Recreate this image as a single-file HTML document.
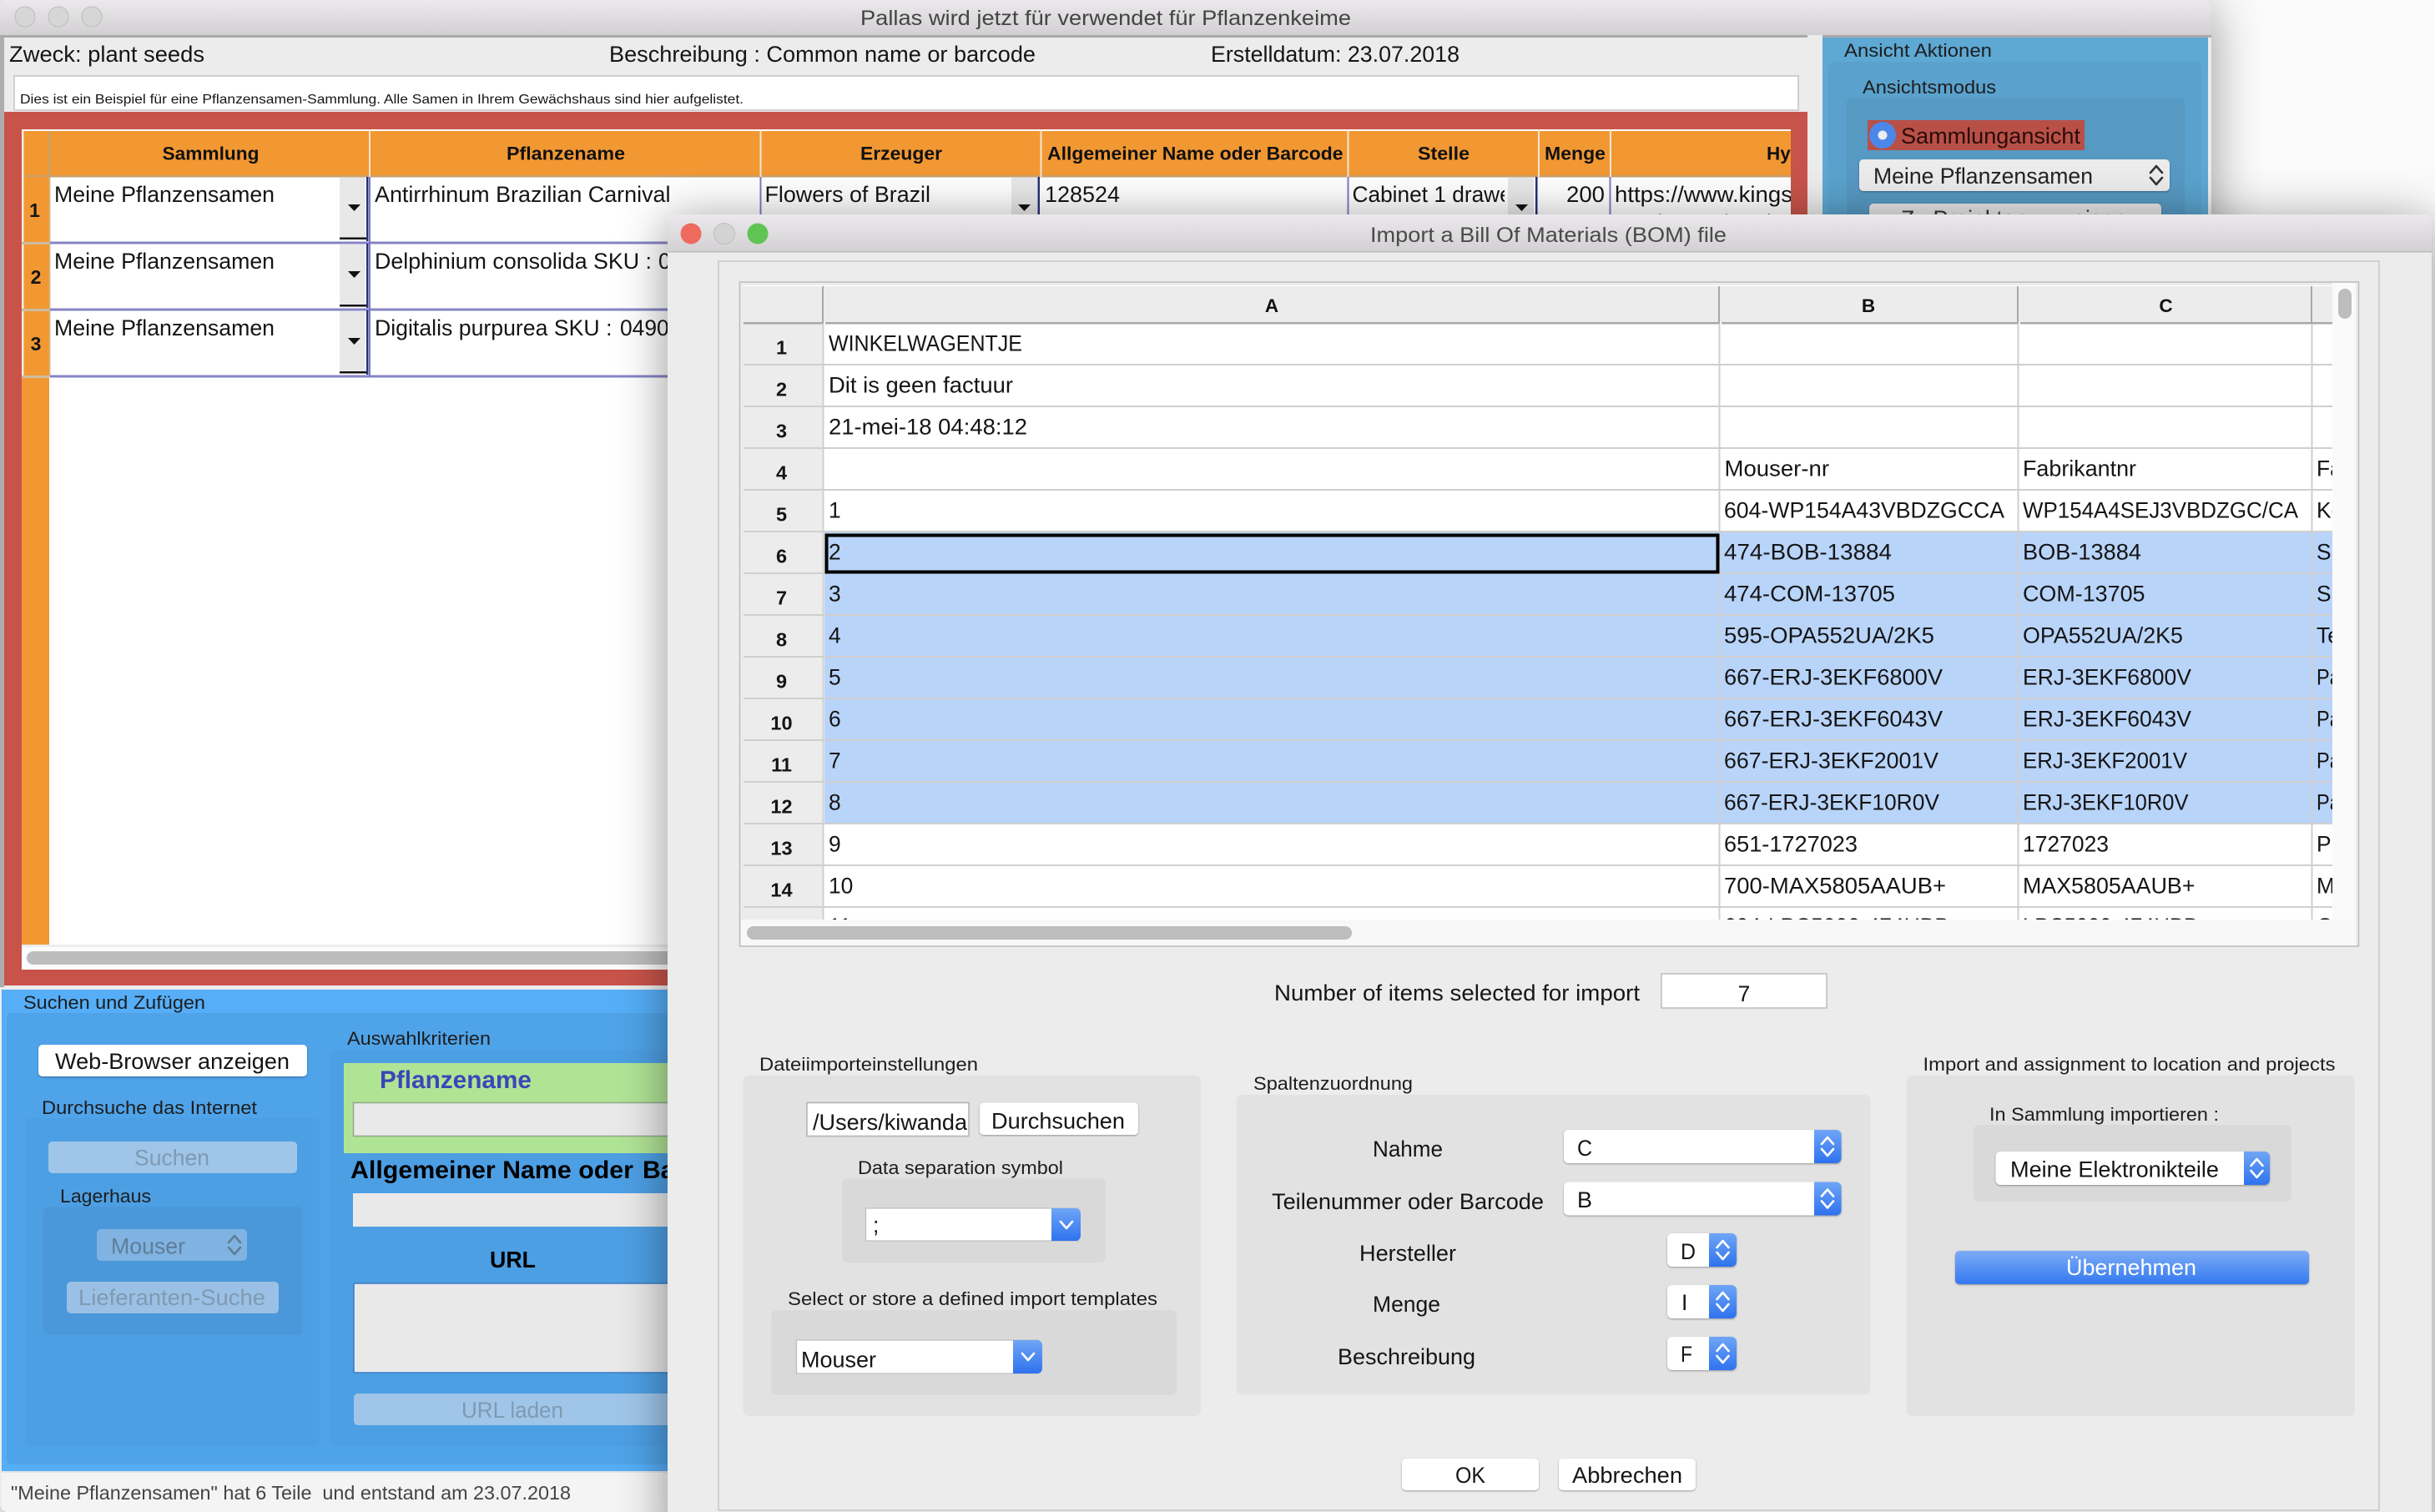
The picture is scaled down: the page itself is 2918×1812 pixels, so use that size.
<!DOCTYPE html>
<html lang="de"><head><meta charset="utf-8"><title>Pallas</title>
<style>
html,body{margin:0;padding:0;background:#fbfbfc;width:2918px;height:1812px;overflow:hidden}
svg{display:block}
text{font-family:"Liberation Sans",Arial,sans-serif;fill:#151515;font-size:26.4px}
.b{font-weight:bold}
.s{font-size:22px;fill:#1d1d1d}
.d{fill:#7f9ab2}
.t{font-size:25px;fill:#444}
.h{font-size:22.5px;font-weight:bold;fill:#111}
</style></head><body>
<svg xmlns="http://www.w3.org/2000/svg" width="2918" height="1812" viewBox="0 0 2918 1812">
<defs>
<filter id="ws" filterUnits="userSpaceOnUse" x="-200" y="-200" width="3400" height="2300"><feDropShadow dx="0" dy="8" stdDeviation="30" flood-color="#000" flood-opacity=".42"/></filter>
<filter id="bs" x="-10%" y="-20%" width="120%" height="150%"><feDropShadow dx="0" dy="1" stdDeviation="1" flood-color="#000" flood-opacity=".35"/></filter>
<linearGradient id="tb" x1="0" y1="0" x2="0" y2="1"><stop offset="0" stop-color="#ebe9eb"/><stop offset="1" stop-color="#d2d0d2"/></linearGradient>
<linearGradient id="bl" x1="0" y1="0" x2="0" y2="1"><stop offset="0" stop-color="#6fa6f7"/><stop offset="1" stop-color="#2f72ee"/></linearGradient>
<linearGradient id="ub" x1="0" y1="0" x2="0" y2="1"><stop offset="0" stop-color="#7cacf6"/><stop offset="1" stop-color="#3478f0"/></linearGradient>
<clipPath id="c-back"><rect x="0" y="0" width="2650" height="1812" rx="10"/></clipPath>
<clipPath id="c-tbl"><rect x="26" y="155" width="2120" height="1007"/></clipPath>
<clipPath id="c-stelle"><rect x="1616" y="212" width="187" height="80"/></clipPath>
<clipPath id="c-grid"><rect x="891" y="343" width="1904" height="759"/></clipPath>
<clipPath id="c-path"><rect x="967" y="1321" width="192" height="41"/></clipPath>
<g id="ud" fill="none" stroke-width="2.6" stroke-linecap="round" stroke-linejoin="round"><path d="M-7 -3 L0 -11 L7 -3"/><path d="M-7 3 L0 11 L7 3"/></g>
</defs>

<rect width="2918" height="1812" fill="#fbfbfc"/>

<!-- BACK WINDOW -->
<rect x="0" y="0" width="2650" height="1812" rx="10" fill="#ececec" filter="url(#ws)"/>
<g clip-path="url(#c-back)">
<rect x="0" y="0" width="2650" height="42" fill="url(#tb)"/>
<rect x="0" y="42" width="2166" height="3" fill="#a9a9a9"/>
<rect x="2184" y="42" width="466" height="3" fill="#a9a9a9"/>
<rect x="0" y="45" width="5" height="1138" fill="#adadad"/>
<circle cx="30" cy="20" r="12" fill="#d6d6d6" stroke="#bdbdbd"/>
<circle cx="70" cy="20" r="12" fill="#d6d6d6" stroke="#bdbdbd"/>
<circle cx="110" cy="20" r="12" fill="#d6d6d6" stroke="#bdbdbd"/>
<text class="t" x="1031" y="30" textLength="588" lengthAdjust="spacingAndGlyphs">Pallas wird jetzt für verwendet für Pflanzenkeime</text>

<text x="11" y="74" textLength="234" lengthAdjust="spacingAndGlyphs">Zweck: plant seeds</text>
<text x="730" y="74" textLength="511" lengthAdjust="spacingAndGlyphs">Beschreibung : Common name or barcode</text>
<text x="1451" y="74" textLength="298" lengthAdjust="spacingAndGlyphs">Erstelldatum: 23.07.2018</text>

<rect x="17" y="91" width="2138" height="41" fill="#fff" stroke="#c4c4c4" stroke-width="1.5"/>
<text x="24" y="124" style="font-size:16px" textLength="867" lengthAdjust="spacingAndGlyphs">Dies ist ein Beispiel für eine Pflanzensamen-Sammlung. Alle Samen in Ihrem Gewächshaus sind hier aufgelistet.</text>

<!-- red frame and table -->
<rect x="5" y="134" width="2161" height="1047" fill="#c8534a"/>
<rect x="26" y="155" width="2120" height="1007" fill="#fff"/>
<g clip-path="url(#c-tbl)">
<rect x="26" y="157" width="2120" height="53" fill="#f29833"/>
<rect x="26" y="210" width="2120" height="2.5" fill="#c9a06c"/>
<rect x="58" y="157" width="2.5" height="55" fill="#c9a06c"/>
<rect x="442" y="155" width="2" height="57" fill="#f5e7d2"/><rect x="910.5" y="155" width="2" height="57" fill="#f5e7d2"/><rect x="1246.5" y="155" width="2" height="57" fill="#f5e7d2"/><rect x="1614.5" y="155" width="2" height="57" fill="#f5e7d2"/><rect x="1843" y="155" width="2" height="57" fill="#f5e7d2"/><rect x="1929" y="155" width="2" height="57" fill="#f5e7d2"/>
<text class="h" x="194.5" y="191.5" textLength="116" lengthAdjust="spacingAndGlyphs">Sammlung</text>
<text class="h" x="607" y="191.5" textLength="142" lengthAdjust="spacingAndGlyphs">Pflanzename</text>
<text class="h" x="1031" y="191.5" textLength="98" lengthAdjust="spacingAndGlyphs">Erzeuger</text>
<text class="h" x="1255" y="191.5" textLength="354.5" lengthAdjust="spacingAndGlyphs">Allgemeiner Name oder Barcode</text>
<text class="h" x="1699" y="191.5" textLength="62" lengthAdjust="spacingAndGlyphs">Stelle</text>
<text class="h" x="1851" y="191.5" textLength="73" lengthAdjust="spacingAndGlyphs">Menge</text>
<text class="h" x="2117" y="191.5">Hyperlink</text>

<!-- row header column -->
<rect x="26" y="212" width="33" height="920" fill="#f29833"/>
<rect x="26" y="155" width="2.500" height="297" fill="#f7ecdc"/>
<rect x="26" y="290" width="33" height="3" fill="#cdbb9f"/><rect x="26" y="370" width="33" height="3" fill="#cdbb9f"/><rect x="26" y="450" width="33" height="3" fill="#cdbb9f"/>
<rect x="59" y="212" width="1.5" height="240" fill="#cdbb9f"/>
<text class="b" x="41.5" y="260" text-anchor="middle" style="font-size:23px">1</text>
<text class="b" x="43" y="340" text-anchor="middle" style="font-size:23px">2</text>
<text class="b" x="43" y="420" text-anchor="middle" style="font-size:23px">3</text>

<!-- grid lines -->
<rect x="60" y="289.5" width="1900" height="3" fill="#8585c4"/><rect x="60" y="369.5" width="1900" height="3" fill="#8585c4"/><rect x="60" y="449.5" width="1900" height="3" fill="#8585c4"/>
<rect x="442" y="212" width="2" height="240" fill="#7a7ac2"/><rect x="910.5" y="212" width="2" height="240" fill="#7a7ac2"/><rect x="1614.5" y="212" width="2" height="240" fill="#7a7ac2"/><rect x="1928.5" y="212" width="2" height="240" fill="#7a7ac2"/>

<!-- combo buttons -->
<rect x="407" y="213" width="31" height="72" fill="#e8e8e8"/><rect x="407" y="284.5" width="33" height="2.5" fill="#111"/><rect x="439" y="212" width="2.5" height="77" fill="#262f74"/><path d="M417 245H432L424.500 253Z" fill="#111"/>
<rect x="407" y="293" width="31" height="72" fill="#e8e8e8"/><rect x="407" y="365" width="33" height="2.5" fill="#111"/><rect x="439" y="292" width="2.5" height="77" fill="#262f74"/><path d="M417 325H432L424.500 333Z" fill="#111"/>
<rect x="407" y="373" width="31" height="72" fill="#e8e8e8"/><rect x="407" y="445" width="33" height="2.500" fill="#111"/><rect x="439" y="372" width="2.5" height="77" fill="#262f74"/><path d="M417 405H432L424.500 413Z" fill="#111"/>
<rect x="1212" y="213" width="31" height="72" fill="#e8e8e8"/><rect x="1243.500" y="212" width="2.5" height="77" fill="#262f74"/><path d="M1220 245H1235L1227.500 253Z" fill="#111"/>
<rect x="1807" y="213" width="31" height="72" fill="#e8e8e8"/><rect x="1840" y="212" width="2.500" height="77" fill="#262f74"/><path d="M1816 245H1831L1823.500 253Z" fill="#111"/>

<!-- cells -->
<text x="65" y="242" textLength="264" lengthAdjust="spacingAndGlyphs">Meine Pflanzensamen</text>
<text x="65" y="322" textLength="264" lengthAdjust="spacingAndGlyphs">Meine Pflanzensamen</text>
<text x="65" y="402" textLength="264" lengthAdjust="spacingAndGlyphs">Meine Pflanzensamen</text>
<text x="449" y="242" textLength="354.5" lengthAdjust="spacingAndGlyphs">Antirrhinum Brazilian Carnival</text>
<text x="449" y="322" textLength="332" lengthAdjust="spacingAndGlyphs">Delphinium consolida SKU :</text><text x="789" y="322">0490</text>
<text x="449" y="402" textLength="284.5" lengthAdjust="spacingAndGlyphs">Digitalis purpurea SKU :</text><text x="743" y="402">0490</text>
<text x="916.5" y="242" textLength="198.5" lengthAdjust="spacingAndGlyphs">Flowers of Brazil</text>
<text x="1252" y="242" textLength="90" lengthAdjust="spacingAndGlyphs">128524</text>
<g clip-path="url(#c-stelle)"><text x="1620.5" y="242" style="font-size:27px" textLength="200" lengthAdjust="spacingAndGlyphs">Cabinet 1 drawer</text></g>
<text x="1877" y="242" textLength="46" lengthAdjust="spacingAndGlyphs">200</text>
<text x="1935" y="242" textLength="213" lengthAdjust="spacingAndGlyphs">https://www.kings</text>
<text x="1935" y="276">seeds.com/product.html?search</text>

<!-- h scrollbar -->
<rect x="26" y="1132" width="2120" height="3" fill="#ededed"/>
<rect x="26" y="1135" width="2120" height="27" fill="#fbfbfb"/>
<rect x="32" y="1140" width="2100" height="16" rx="8" fill="#bdbdbd"/>
</g>

<!-- search panel -->
<rect x="2" y="1186" width="900" height="577" fill="#55aef7"/>
<text class="s" x="28" y="1209" textLength="218" lengthAdjust="spacingAndGlyphs">Suchen und Zufügen</text>
<rect x="8" y="1214" width="900" height="541" rx="6" fill="#4fa3e9"/>
<rect x="46" y="1252" width="322" height="38" rx="5" fill="#fff" filter="url(#bs)"/>
<text x="66" y="1281" textLength="281" lengthAdjust="spacingAndGlyphs">Web-Browser anzeigen</text>
<text class="s" x="50" y="1335" textLength="258" lengthAdjust="spacingAndGlyphs">Durchsuche das Internet</text>
<rect x="30" y="1340" width="353" height="393" rx="6" fill="#4d9fe4"/>
<rect x="58" y="1368" width="298" height="38" rx="5" fill="#9fc6e9"/>
<text class="d" x="161" y="1396.5" textLength="90" lengthAdjust="spacingAndGlyphs">Suchen</text>
<text class="s" x="72" y="1441" textLength="109" lengthAdjust="spacingAndGlyphs">Lagerhaus</text>
<rect x="52" y="1446" width="310" height="154" rx="6" fill="#4a97da"/>
<rect x="116" y="1473" width="180" height="38" rx="5" fill="#80b3e1"/>
<text x="133" y="1502.5" textLength="89" lengthAdjust="spacingAndGlyphs" style="fill:#5f7d98">Mouser</text>
<use href="#ud" x="281" y="1492" stroke="#5f7d98"/>
<rect x="80" y="1536" width="254" height="38" rx="5" fill="#9ac1e5"/>
<text class="d" x="94" y="1564" textLength="224" lengthAdjust="spacingAndGlyphs">Lieferanten-Suche</text>

<rect x="396" y="1258" width="500" height="475" rx="6" fill="#4d9fe4"/>
<text class="s" x="416" y="1252" textLength="172" lengthAdjust="spacingAndGlyphs">Auswahlkriterien</text>
<rect x="412" y="1274" width="500" height="108" fill="#b0e495"/>
<text class="b" x="455" y="1304" textLength="182" lengthAdjust="spacingAndGlyphs" style="font-size:30px;fill:#3b46b8">Pflanzename</text>
<rect x="423.500" y="1321.500" width="500" height="40" fill="#e9e9e9" stroke="#8ea888" stroke-width="1.500"/>
<text class="b" x="420" y="1412" textLength="339" lengthAdjust="spacingAndGlyphs" style="font-size:30px;fill:#000">Allgemeiner Name oder</text>
<text class="b" x="770" y="1412" style="font-size:30px;fill:#000">Barcode</text>
<rect x="423" y="1430" width="500" height="40" fill="#e9e9e9"/>
<text class="b" x="587" y="1519" textLength="55" lengthAdjust="spacingAndGlyphs" style="font-size:28px;fill:#000">URL</text>
<rect x="424" y="1538" width="500" height="107" fill="#e9e9e9" stroke="#3a7cc4" stroke-width="1.500"/>
<rect x="424" y="1670" width="500" height="38" rx="5" fill="#9fc6e9"/>
<text class="d" x="553" y="1699" textLength="122" lengthAdjust="spacingAndGlyphs">URL laden</text>

<rect x="2" y="1763" width="900" height="2.500" fill="#e4e4e4"/>
<rect x="2" y="1765" width="900" height="47" fill="#f4f4f4"/>
<text x="13" y="1797" textLength="671" lengthAdjust="spacingAndGlyphs" style="font-size:23px;fill:#444;white-space:pre">"Meine Pflanzensamen" hat 6 Teile  und entstand am 23.07.2018</text>

<!-- right panel -->
<rect x="2184" y="45" width="462" height="300" fill="#5ea8d4"/>
<rect x="2191" y="74" width="447" height="270" rx="6" fill="#5aa2cd"/>
<rect x="2213" y="118" width="405" height="220" rx="6" fill="#5699c3"/>
<text class="s" x="2210" y="68" textLength="177" lengthAdjust="spacingAndGlyphs">Ansicht Aktionen</text>
<text class="s" x="2232" y="112" textLength="160" lengthAdjust="spacingAndGlyphs">Ansichtsmodus</text>
<rect x="2238" y="144" width="260" height="36" fill="#b85048"/>
<circle cx="2256" cy="162" r="16" fill="#4b87e8"/><circle cx="2256" cy="162" r="5.500" fill="#ececf4"/>
<text x="2278" y="172" textLength="215" lengthAdjust="spacingAndGlyphs" style="fill:#2a0b08">Sammlungansicht</text>
<rect x="2228" y="191" width="372" height="38" rx="5" fill="#ececec" filter="url(#bs)"/>
<text x="2245" y="220" textLength="263" lengthAdjust="spacingAndGlyphs" style="fill:#222">Meine Pflanzensamen</text>
<use href="#ud" x="2584" y="210" stroke="#333"/>
<rect x="2240" y="244" width="350" height="40" rx="5" fill="#e6e6e6" filter="url(#bs)"/>
<text x="2278" y="271" textLength="270" lengthAdjust="spacingAndGlyphs" style="fill:#333">Zu Projekten zuweisen</text>
</g>

<!-- DIALOG -->
<rect x="800" y="257" width="2114" height="1600" rx="10" fill="#ececec" filter="url(#ws)"/>
<path d="M800 302V267a10 10 0 0 1 10-10H2904a10 10 0 0 1 10 10V302Z" fill="url(#tb)"/>
<rect x="800" y="301" width="2114" height="1.500" fill="#bcbcbc"/>
<circle cx="828" cy="280" r="12.500" fill="#ee6a5f"/><circle cx="868" cy="280" r="12.500" fill="#d3d3d3" stroke="#bdbdbd"/><circle cx="908" cy="280" r="12.500" fill="#5fc454"/>
<text class="t" x="1642" y="290" textLength="427" lengthAdjust="spacingAndGlyphs" style="fill:#4a4a4a">Import a Bill Of Materials (BOM) file</text>
<rect x="861" y="313" width="1990" height="1497" fill="none" stroke="#c6c6c6" stroke-width="1.500"/>

<!-- spreadsheet -->
<rect x="886.500" y="338" width="1940" height="796" fill="#ececec" stroke="#bcbcbc" stroke-width="1.500"/>
<rect x="891" y="342" width="1932" height="760" fill="#fff"/>
<rect x="2795" y="339" width="28" height="794" fill="#fafafa"/>
<rect x="888" y="1102" width="1935" height="31" fill="#f8f8f8"/>
<rect x="2802" y="346" width="16" height="36" rx="8" fill="#bdbdbd"/>
<rect x="895" y="1110" width="725" height="16" rx="8" fill="#bdbdbd"/>
<g clip-path="url(#c-grid)">
<rect x="891" y="343" width="1904" height="43" fill="#ececec"/>
<rect x="891" y="388" width="95" height="720" fill="#ececec"/>
<rect x="988" y="637" width="1807" height="350" fill="#b9d4f9"/>
<rect x="891" y="386" width="1904" height="2.500" fill="#a8a8a8"/>
<g fill="#cfcfcf">
<rect x="891" y="436" width="1904" height="2"/><rect x="891" y="486" width="1904" height="2"/><rect x="891" y="536" width="1904" height="2"/><rect x="891" y="586" width="1904" height="2"/><rect x="891" y="636" width="1904" height="2"/><rect x="891" y="686" width="1904" height="2"/><rect x="891" y="736" width="1904" height="2"/><rect x="891" y="786" width="1904" height="2"/><rect x="891" y="836" width="1904" height="2"/><rect x="891" y="886" width="1904" height="2"/><rect x="891" y="936" width="1904" height="2"/><rect x="891" y="986" width="1904" height="2"/><rect x="891" y="1036" width="1904" height="2"/><rect x="891" y="1086" width="1904" height="2"/>
<rect x="985.500" y="388" width="2" height="720"/><rect x="2059.500" y="388" width="2" height="720"/><rect x="2417.500" y="388" width="2" height="720"/><rect x="2769.500" y="388" width="2" height="720"/>
</g>
<rect x="985" y="343" width="2" height="45" fill="#a8a8a8"/><rect x="2059" y="343" width="2" height="45" fill="#a8a8a8"/><rect x="2417" y="343" width="2" height="45" fill="#a8a8a8"/><rect x="2769" y="343" width="2" height="45" fill="#a8a8a8"/>
<rect x="987" y="386" width="2" height="2.500" fill="#fff"/><rect x="2061" y="386" width="2" height="2.500" fill="#fff"/><rect x="2419" y="386" width="2" height="2.500" fill="#fff"/>
<rect x="990.500" y="641.500" width="1068" height="44" fill="none" stroke="#000" stroke-width="4"/>

<text class="h" x="1524" y="374" text-anchor="middle">A</text><text class="h" x="2239" y="374" text-anchor="middle">B</text><text class="h" x="2595.500" y="374" text-anchor="middle">C</text>
<g text-anchor="middle">
<text class="b" x="936.500" y="424.600" style="font-size:23.500px">1</text><text class="b" x="936.500" y="474.600" style="font-size:23.500px">2</text><text class="b" x="936.500" y="524.600" style="font-size:23.500px">3</text><text class="b" x="936.500" y="574.600" style="font-size:23.500px">4</text><text class="b" x="936.500" y="624.600" style="font-size:23.500px">5</text><text class="b" x="936.500" y="674.600" style="font-size:23.500px">6</text><text class="b" x="936.500" y="724.600" style="font-size:23.500px">7</text><text class="b" x="936.500" y="774.600" style="font-size:23.500px">8</text><text class="b" x="936.500" y="824.600" style="font-size:23.500px">9</text><text class="b" x="936.500" y="874.600" style="font-size:23.500px">10</text><text class="b" x="936.500" y="924.600" style="font-size:23.500px">11</text><text class="b" x="936.500" y="974.600" style="font-size:23.500px">12</text><text class="b" x="936.500" y="1024.600" style="font-size:23.500px">13</text><text class="b" x="936.500" y="1074.600" style="font-size:23.500px">14</text>
</g>

<text x="993" y="420.500" textLength="232" lengthAdjust="spacingAndGlyphs">WINKELWAGENTJE</text>
<text x="993" y="470.500" textLength="221" lengthAdjust="spacingAndGlyphs">Dit is geen factuur</text>
<text x="993" y="520.500" textLength="238" lengthAdjust="spacingAndGlyphs">21-mei-18 04:48:12</text>
<text x="993" y="620.500">1</text><text x="993" y="670.500">2</text><text x="993" y="720.500">3</text><text x="993" y="770.500">4</text><text x="993" y="820.500">5</text><text x="993" y="870.500">6</text><text x="993" y="920.500">7</text><text x="993" y="970.500">8</text><text x="993" y="1020.500">9</text><text x="993" y="1070.500">10</text><text x="993" y="1119">11</text>

<text x="2066.500" y="570.500" textLength="125.500" lengthAdjust="spacingAndGlyphs">Mouser-nr</text>
<text x="2066" y="620.500" textLength="336" lengthAdjust="spacingAndGlyphs">604-WP154A43VBDZGCCA</text>
<text x="2066" y="670.500" textLength="201" lengthAdjust="spacingAndGlyphs">474-BOB-13884</text>
<text x="2066" y="720.500" textLength="205" lengthAdjust="spacingAndGlyphs">474-COM-13705</text>
<text x="2066" y="770.500" textLength="252" lengthAdjust="spacingAndGlyphs">595-OPA552UA/2K5</text>
<text x="2066" y="820.500" textLength="262" lengthAdjust="spacingAndGlyphs">667-ERJ-3EKF6800V</text>
<text x="2066" y="870.500" textLength="262" lengthAdjust="spacingAndGlyphs">667-ERJ-3EKF6043V</text>
<text x="2066" y="920.500" textLength="257" lengthAdjust="spacingAndGlyphs">667-ERJ-3EKF2001V</text>
<text x="2066" y="970.500" textLength="258" lengthAdjust="spacingAndGlyphs">667-ERJ-3EKF10R0V</text>
<text x="2066" y="1020.500" textLength="160" lengthAdjust="spacingAndGlyphs">651-1727023</text>
<text x="2066" y="1070.500" textLength="266" lengthAdjust="spacingAndGlyphs">700-MAX5805AAUB+</text>
<text x="2066" y="1119" textLength="270" lengthAdjust="spacingAndGlyphs">604-LPC5000-474UBB</text>

<text x="2424" y="570.500" textLength="136" lengthAdjust="spacingAndGlyphs">Fabrikantnr</text>
<text x="2424" y="620.500" textLength="330" lengthAdjust="spacingAndGlyphs">WP154A4SEJ3VBDZGC/CA</text>
<text x="2424" y="670.500" textLength="142" lengthAdjust="spacingAndGlyphs">BOB-13884</text>
<text x="2424" y="720.500" textLength="146.500" lengthAdjust="spacingAndGlyphs">COM-13705</text>
<text x="2424" y="770.500" textLength="192" lengthAdjust="spacingAndGlyphs">OPA552UA/2K5</text>
<text x="2424" y="820.500" textLength="202" lengthAdjust="spacingAndGlyphs">ERJ-3EKF6800V</text>
<text x="2424" y="870.500" textLength="202" lengthAdjust="spacingAndGlyphs">ERJ-3EKF6043V</text>
<text x="2424" y="920.500" textLength="197" lengthAdjust="spacingAndGlyphs">ERJ-3EKF2001V</text>
<text x="2424" y="970.500" textLength="198.500" lengthAdjust="spacingAndGlyphs">ERJ-3EKF10R0V</text>
<text x="2424" y="1020.500" textLength="103" lengthAdjust="spacingAndGlyphs">1727023</text>
<text x="2424" y="1070.500" textLength="206.500" lengthAdjust="spacingAndGlyphs">MAX5805AAUB+</text>
<text x="2424" y="1119" textLength="210" lengthAdjust="spacingAndGlyphs">LPC5000-474UBB</text>

<text x="2776" y="570.500">Fabrikant</text><text x="2776" y="620.500">Kemet</text><text x="2776" y="670.500">SparkFun</text><text x="2776" y="720.500">SparkFun</text><text x="2776" y="770.500">Texas</text><text x="2776" y="820.500" textLength="110" lengthAdjust="spacingAndGlyphs">Panasonic</text><text x="2776" y="870.500" textLength="110" lengthAdjust="spacingAndGlyphs">Panasonic</text><text x="2776" y="920.500" textLength="110" lengthAdjust="spacingAndGlyphs">Panasonic</text><text x="2776" y="970.500" textLength="110" lengthAdjust="spacingAndGlyphs">Panasonic</text><text x="2776" y="1020.500">Phoenix</text><text x="2776" y="1070.500">Maxim</text><text x="2776" y="1119">Cypress</text>
</g>

<!-- count -->
<text x="1527" y="1199" textLength="438" lengthAdjust="spacingAndGlyphs">Number of items selected for import</text>
<rect x="1991" y="1167" width="198" height="41" fill="#fff" stroke="#bdbdbd" stroke-width="1.500"/>
<text x="2090" y="1200" text-anchor="middle">7</text>

<!-- import settings group -->
<text class="s" x="910" y="1283" textLength="262" lengthAdjust="spacingAndGlyphs">Dateiimporteinstellungen</text>
<rect x="890.500" y="1288.500" width="548.500" height="408.500" rx="7" fill="#e2e2e2"/>
<rect x="967" y="1321.500" width="194" height="40" fill="#fff" stroke="#b0b0b0" stroke-width="1.500"/>
<g clip-path="url(#c-path)"><text x="974" y="1354" textLength="185" lengthAdjust="spacingAndGlyphs">/Users/kiwanda</text></g>
<rect x="1174" y="1321.500" width="190" height="38.500" rx="5" fill="#fff" filter="url(#bs)"/>
<text x="1188" y="1352.500" textLength="160" lengthAdjust="spacingAndGlyphs">Durchsuchen</text>
<text class="s" x="1028" y="1407" textLength="246" lengthAdjust="spacingAndGlyphs">Data separation symbol</text>
<rect x="1009" y="1412" width="316" height="101" rx="7" fill="#d9d9d9"/>
<rect x="1037.500" y="1448" width="255" height="39" fill="#fff" stroke="#bdbdbd" stroke-width="1.200"/>
<path d="M1260 1448H1289a6 6 0 0 1 6 6V1481a6 6 0 0 1-6 6H1260Z" fill="url(#bl)"/>
<path d="M1271 1464L1278 1472L1285 1464" fill="none" stroke="#fff" stroke-width="2.600" stroke-linecap="round" stroke-linejoin="round"/>
<text x="1046" y="1477">;</text>
<text class="s" x="944" y="1564" textLength="443" lengthAdjust="spacingAndGlyphs">Select or store a defined import templates</text>
<rect x="924" y="1570" width="486" height="102" rx="7" fill="#d9d9d9"/>
<rect x="954.500" y="1606" width="290" height="40" fill="#fff" stroke="#bdbdbd" stroke-width="1.200"/>
<path d="M1214 1606H1243a6 6 0 0 1 6 6V1640a6 6 0 0 1-6 6H1214Z" fill="url(#bl)"/>
<path d="M1225 1622L1232 1630L1239 1622" fill="none" stroke="#fff" stroke-width="2.600" stroke-linecap="round" stroke-linejoin="round"/>
<text x="960" y="1638.500" textLength="90" lengthAdjust="spacingAndGlyphs">Mouser</text>

<!-- column mapping group -->
<text class="s" x="1502" y="1306" textLength="191" lengthAdjust="spacingAndGlyphs">Spaltenzuordnung</text>
<rect x="1482" y="1312" width="759.500" height="359.500" rx="7" fill="#e2e2e2"/>
<text x="1645" y="1386" textLength="84" lengthAdjust="spacingAndGlyphs">Nahme</text>
<text x="1524" y="1449" textLength="326" lengthAdjust="spacingAndGlyphs">Teilenummer oder Barcode</text>
<text x="1629" y="1511" textLength="116" lengthAdjust="spacingAndGlyphs">Hersteller</text>
<text x="1645" y="1572" textLength="81" lengthAdjust="spacingAndGlyphs">Menge</text>
<text x="1603" y="1635" textLength="165" lengthAdjust="spacingAndGlyphs">Beschreibung</text>

<rect x="1874" y="1354" width="332.500" height="40" rx="6" fill="#fff" filter="url(#bs)"/>
<path d="M2174 1354H2200.500a6 6 0 0 1 6 6V1388a6 6 0 0 1-6 6H2174Z" fill="url(#bl)"/>
<use href="#ud" x="2190" y="1374" stroke="#fff"/>
<text x="1890" y="1385" textLength="18" lengthAdjust="spacingAndGlyphs">C</text>
<rect x="1874" y="1416.500" width="332.500" height="40" rx="6" fill="#fff" filter="url(#bs)"/>
<path d="M2174 1416.500H2200.500a6 6 0 0 1 6 6V1450.500a6 6 0 0 1-6 6H2174Z" fill="url(#bl)"/>
<use href="#ud" x="2190" y="1436.500" stroke="#fff"/>
<text x="1890" y="1447" textLength="18" lengthAdjust="spacingAndGlyphs">B</text>

<rect x="1998" y="1478" width="83" height="40" rx="6" fill="#fff" filter="url(#bs)"/>
<path d="M2048 1478H2075a6 6 0 0 1 6 6V1512a6 6 0 0 1-6 6H2048Z" fill="url(#bl)"/>
<use href="#ud" x="2064.500" y="1498" stroke="#fff"/>
<text x="2014" y="1509" textLength="18" lengthAdjust="spacingAndGlyphs">D</text>
<rect x="1998" y="1540" width="83" height="40" rx="6" fill="#fff" filter="url(#bs)"/>
<path d="M2048 1540H2075a6 6 0 0 1 6 6V1574a6 6 0 0 1-6 6H2048Z" fill="url(#bl)"/>
<use href="#ud" x="2064.500" y="1560" stroke="#fff"/>
<text x="2015" y="1570">I</text>
<rect x="1998" y="1602" width="83" height="40" rx="6" fill="#fff" filter="url(#bs)"/>
<path d="M2048 1602H2075a6 6 0 0 1 6 6V1636a6 6 0 0 1-6 6H2048Z" fill="url(#bl)"/>
<use href="#ud" x="2064.500" y="1622" stroke="#fff"/>
<text x="2014" y="1632" textLength="14" lengthAdjust="spacingAndGlyphs">F</text>

<!-- assign group -->
<text class="s" x="2304.500" y="1283" textLength="494" lengthAdjust="spacingAndGlyphs">Import and assignment to location and projects</text>
<rect x="2284.500" y="1288.500" width="537.500" height="408.500" rx="7" fill="#e2e2e2"/>
<text class="s" x="2384" y="1343" textLength="275" lengthAdjust="spacingAndGlyphs">In Sammlung importieren :</text>
<rect x="2365" y="1348" width="381" height="92" rx="7" fill="#d9d9d9"/>
<rect x="2391.500" y="1380" width="328.500" height="40" rx="6" fill="#fff" filter="url(#bs)"/>
<path d="M2689 1380H2714a6 6 0 0 1 6 6V1414a6 6 0 0 1-6 6H2689Z" fill="url(#bl)"/>
<use href="#ud" x="2704.500" y="1400" stroke="#fff"/>
<text x="2409" y="1410.500" textLength="250" lengthAdjust="spacingAndGlyphs">Meine Elektronikteile</text>
<rect x="2343" y="1499" width="424" height="40" rx="5" fill="url(#ub)" filter="url(#bs)"/>
<text x="2476" y="1528" textLength="156" lengthAdjust="spacingAndGlyphs" style="fill:#fff">Übernehmen</text>

<!-- OK / cancel -->
<rect x="1680" y="1748" width="164" height="38" rx="5" fill="#fff" filter="url(#bs)"/>
<text x="1744" y="1777" textLength="36" lengthAdjust="spacingAndGlyphs">OK</text>
<rect x="1868" y="1748" width="164" height="38" rx="5" fill="#fff" filter="url(#bs)"/>
<text x="1884" y="1777" textLength="132" lengthAdjust="spacingAndGlyphs">Abbrechen</text>
</svg>
</body></html>
